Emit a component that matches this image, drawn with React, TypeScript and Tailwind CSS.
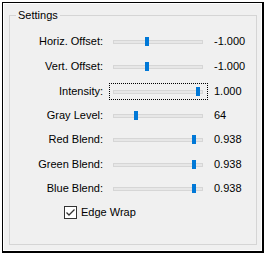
import React from 'react';

interface RowProps {
  label: string;
  value: string;
  thumb: number;
  focused?: boolean;
  height: string;
}

const Row: React.FC<RowProps> = ({ label, value, thumb, focused, height }) => {
  return (
    <div className={`flex items-center ${height}`}>
      <div className="w-[94px] text-right pr-[1px]">{label}</div>
      <div
        className={`relative ml-[5px] w-[99px] h-[17px] ${
          focused ? 'border border-dotted border-black' : 'border border-transparent'
        }`}
      >
        {/* track */}
        <div className="absolute left-[3px] right-[4px] top-[6px] h-[4px] bg-[#e7e7e7] border border-[#d6d6d6]" />
        {/* thumb */}
        <div
          className="absolute top-[3px] w-[4px] h-[9px] bg-[#0078d7]"
          style={{ left: thumb }}
        />
      </div>
      <div className="ml-[6px]">{value}</div>
    </div>
  );
};

export default function App() {
  const rows = [
    { label: 'Horiz. Offset:', value: '-1.000', thumb: 35, h: 'h-[25px]' },
    { label: 'Vert. Offset:', value: '-1.000', thumb: 35, h: 'h-[25px]' },
    { label: 'Intensity:', value: '1.000', thumb: 86, h: 'h-[24px]', focused: true },
    { label: 'Gray Level:', value: '64', thumb: 24, h: 'h-[24px]' },
    { label: 'Red Blend:', value: '0.938', thumb: 82, h: 'h-[25px]' },
    { label: 'Green Blend:', value: '0.938', thumb: 82, h: 'h-[24px]' },
    { label: 'Blue Blend:', value: '0.938', thumb: 82, h: 'h-[24px]' },
  ];

  return (
    <div
      className="w-[266px] h-[255px] bg-white pt-[2px] pl-[2px] text-[11px] text-black"
      style={{ fontFamily: '"Liberation Sans", Arial, sans-serif' }}
    >
      <div className="w-[262px] h-[251px] border-l border-t border-black border-r-2 border-b-2 bg-white p-[1px]">
        <div className="h-full bg-[#f0f0f0] pt-[11px] pl-[5px] pr-[4px] pb-[3px]">
          {/* group box */}
          <div className="relative h-[230px] border border-[#d5d5d5]">
            <div className="absolute -top-[8px] left-[6px] px-[2px] bg-[#f0f0f0] leading-[14px]">
              Settings
            </div>
            <div className="pt-[13px]">
              {rows.map((r) => (
                <Row
                  key={r.label}
                  label={r.label}
                  value={r.value}
                  thumb={r.thumb}
                  focused={r.focused}
                  height={r.h}
                />
              ))}
              <div className="flex items-center h-[24px] pl-[54px]">
                <div className="w-[13px] h-[13px] border border-[#333333] bg-white flex items-center justify-center">
                  <svg width="11" height="11" viewBox="0 0 11 11">
                    <path d="M1.5 5.5 L4 8 L9.5 2.5" stroke="#333333" strokeWidth="1.3" fill="none" />
                  </svg>
                </div>
                <span className="ml-[4px]">Edge Wrap</span>
              </div>
            </div>
          </div>
        </div>
      </div>
    </div>
  );
}
